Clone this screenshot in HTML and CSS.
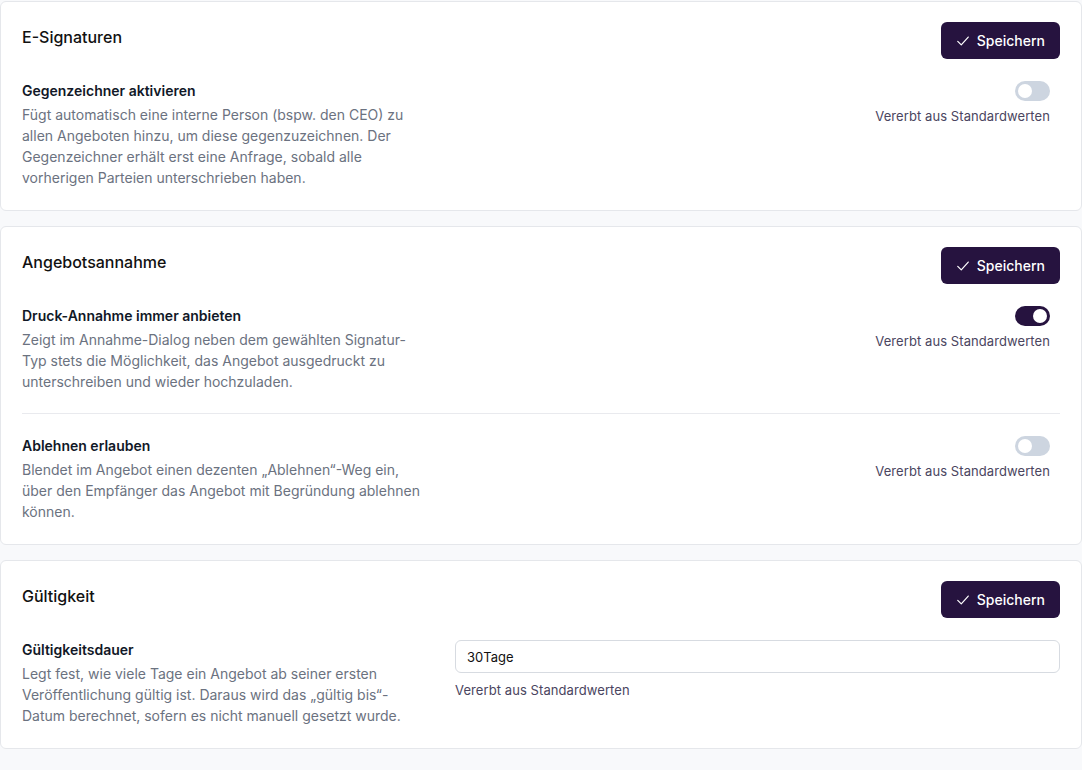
FILE: index.html
```html
<!DOCTYPE html>
<html lang="de">

<head>
    <meta charset="UTF-8">
    <link rel="stylesheet" href="styles.css">
    <title>Angebotseinstellungen</title>
</head>

<body>
    <div class="page">
        <section class="card">
            <div class="card-head">
                <h2 class="card-title">E-Signaturen</h2>
                <button class="save-btn" type="button">
                    <svg class="check" viewBox="0 0 16 16" width="14" height="14"><path d="M2 8.5l4 4 8-9" fill="none" stroke="currentColor" stroke-width="1.4" stroke-linecap="round" stroke-linejoin="round"/></svg>
                    Speichern
                </button>
            </div>
            <div class="rows">
                <div class="row">
                    <div class="info">
                        <div class="label">Gegenzeichner aktivieren</div>
                        <p class="desc">Fügt automatisch eine interne Person (bspw. den CEO) zu allen Angeboten hinzu, um diese gegenzuzeichnen. Der Gegenzeichner erhält erst eine Anfrage, sobald alle vorherigen Parteien unterschrieben haben.</p>
                    </div>
                    <div class="control toggle-control">
                        <span class="toggle"></span>
                        <span class="inherit">Vererbt aus Standardwerten</span>
                    </div>
                </div>
            </div>
        </section>

        <section class="card">
            <div class="card-head">
                <h2 class="card-title">Angebotsannahme</h2>
                <button class="save-btn" type="button">
                    <svg class="check" viewBox="0 0 16 16" width="14" height="14"><path d="M2 8.5l4 4 8-9" fill="none" stroke="currentColor" stroke-width="1.4" stroke-linecap="round" stroke-linejoin="round"/></svg>
                    Speichern
                </button>
            </div>
            <div class="rows">
                <div class="row">
                    <div class="info">
                        <div class="label">Druck-Annahme immer anbieten</div>
                        <p class="desc">Zeigt im Annahme-Dialog neben dem gewählten Signatur-Typ stets die Möglichkeit, das Angebot ausgedruckt zu unterschreiben und wieder hochzuladen.</p>
                    </div>
                    <div class="control toggle-control">
                        <span class="toggle on"></span>
                        <span class="inherit">Vererbt aus Standardwerten</span>
                    </div>
                </div>
                <div class="row">
                    <div class="info">
                        <div class="label">Ablehnen erlauben</div>
                        <p class="desc">Blendet im Angebot einen dezenten „Ablehnen“-Weg ein, über den Empfänger das Angebot mit Begründung ablehnen können.</p>
                    </div>
                    <div class="control toggle-control">
                        <span class="toggle"></span>
                        <span class="inherit">Vererbt aus Standardwerten</span>
                    </div>
                </div>
            </div>
        </section>

        <section class="card">
            <div class="card-head">
                <h2 class="card-title">Gültigkeit</h2>
                <button class="save-btn" type="button">
                    <svg class="check" viewBox="0 0 16 16" width="14" height="14"><path d="M2 8.5l4 4 8-9" fill="none" stroke="currentColor" stroke-width="1.4" stroke-linecap="round" stroke-linejoin="round"/></svg>
                    Speichern
                </button>
            </div>
            <div class="rows">
                <div class="row">
                    <div class="info">
                        <div class="label">Gültigkeitsdauer</div>
                        <p class="desc">Legt fest, wie viele Tage ein Angebot ab seiner ersten Veröffentlichung gültig ist. Daraus wird das „gültig bis“-Datum berechnet, sofern es nicht manuell gesetzt wurde.</p>
                    </div>
                    <div class="control">
                        <input class="field" type="text" value="30Tage">
                        <span class="inherit">Vererbt aus Standardwerten</span>
                    </div>
                </div>
            </div>
        </section>
    </div>
</body>

</html>
```

FILE: styles.css
```css
body {
    margin: 0;
    background-color: #f8f9fb;
    font-family: Inter, "Noto Sans", sans-serif;
    color: #111827;
}

.page {
    display: flex;
    flex-direction: column;
    gap: 15px;
    padding-top: 1px;
}

.card {
    background: white;
    border: 1px solid #e5e7eb;
    border-radius: 6px;
    padding: 20px 21px 22px;
}

.card-head {
    display: flex;
    justify-content: space-between;
    align-items: flex-start;
}

.card-title {
    margin: 0;
    font-size: 16px;
    font-weight: 500;
    line-height: 30px;
    color: #111;
}

.save-btn {
    display: flex;
    align-items: center;
    gap: 7px;
    height: 37px;
    padding: 0 15px;
    background: #26133f;
    color: white;
    border: none;
    border-radius: 6px;
    font-family: inherit;
    font-size: 14px;
    font-weight: 500;
}

.rows {
    margin-top: 22px;
}

.row {
    display: grid;
    grid-template-columns: 402px 1fr;
    column-gap: 31px;
    padding: 22px 0 21px;
    border-top: 1px solid #e9eaee;
}

.row:first-child {
    padding-top: 0;
    border-top: none;
}

.row:last-child {
    padding-bottom: 0;
}

.label {
    font-size: 14px;
    font-weight: 600;
    line-height: 20px;
}

.desc {
    margin: 3px 0 0;
    font-size: 14px;
    line-height: 21px;
    color: #6b7280;
}

.control {
    display: flex;
    flex-direction: column;
    align-items: flex-start;
}

.toggle-control {
    align-items: flex-end;
    padding-right: 10px;
}

.toggle {
    position: relative;
    width: 35px;
    height: 20px;
    border-radius: 10px;
    background: #cdd5e0;
}

.toggle::after {
    content: "";
    position: absolute;
    top: 3px;
    left: 3px;
    width: 14px;
    height: 14px;
    border-radius: 50%;
    background: white;
}

.toggle.on {
    background: #26133f;
}

.toggle.on::after {
    left: 18px;
}

.inherit {
    margin-top: 6px;
    font-size: 13px;
    line-height: 18px;
    letter-spacing: 0.08px;
    color: #4a4560;
}

.field {
    box-sizing: border-box;
    width: 100%;
    height: 33px;
    padding: 0 11px;
    border: 1px solid #d7dbe1;
    border-radius: 6px;
    font-family: inherit;
    font-size: 13px;
    color: #111;
}

.control .field + .inherit {
    margin-top: 8px;
}
```
